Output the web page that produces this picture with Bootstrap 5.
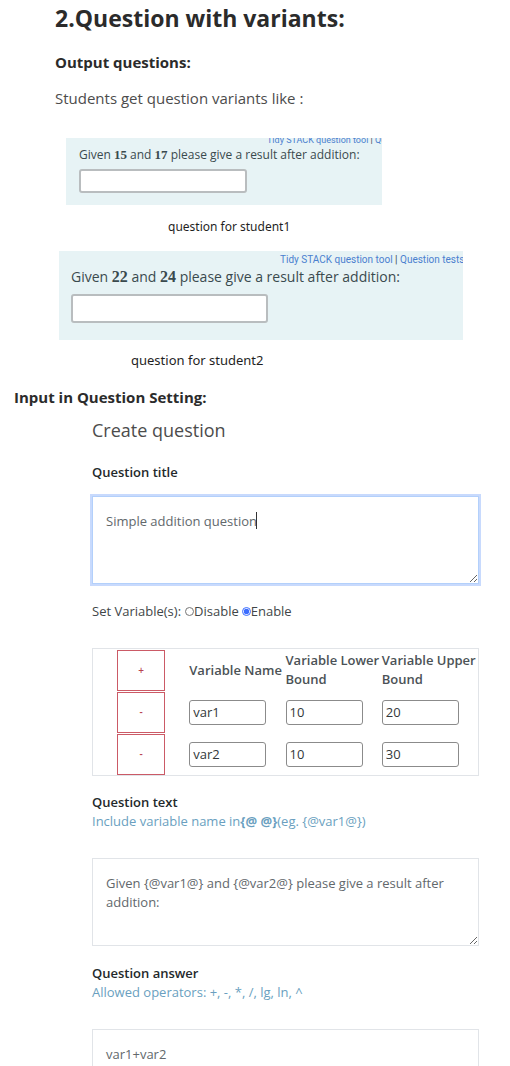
<!DOCTYPE html>
<html lang="en">
<head>
<meta charset="utf-8">
<meta name="viewport" content="width=device-width, initial-scale=1">
<title>Question with variants</title>
<link href="https://cdn.jsdelivr.net/npm/bootstrap@5.3.0/dist/css/bootstrap.min.css" rel="stylesheet">
<style>
  body { font-family: "Open Sans", "Noto Sans", sans-serif; font-size: 13px; line-height: 19px; color: #414648; background: #fff; }
  .guide { height: 100vh; overflow: hidden; }
  .intro { padding-left: 55px; }
  .intro h1 { font-size: 23px; line-height: 36px; font-weight: 700; color: #2b2b2b; }
  .sub-title { font-size: 15px; line-height: 20px; font-weight: 700; color: #2b2b2b; }
  .lead-in { font-size: 15px; line-height: 20px; color: #4c4c4c; }

  .preview { background: #e7f3f5; overflow: hidden; color: #3a4a4e; line-height: 20px; }
  .preview a { color: #4a80cf; text-decoration: none; }
  .preview b { font-family: "Liberation Serif", serif; line-height: 1; }
  .preview input { border: 2px solid #b9bdbf; border-radius: 3px; background: #fff; display: block; max-width: 100%; }
  .preview label { display: block; }
  .tool-links { white-space: nowrap; font-family: Roboto, sans-serif; }
  .preview-a { max-width: 316px; margin: 30px 0 12px 11px; padding: 0 13px 12px; font-size: 12px; }
  .preview-a b { font-size: 13px; }
  .preview-a .tool-links { height: 7px; font-size: 9px; line-height: 10px; padding-left: 188px; }
  .preview-a input { width: 168px; height: 24px; margin-top: 4px; }
  .preview-b { max-width: 404px; margin: 14px 0 10px 4px; padding: 0 12px 17px; font-size: 14px; }
  .preview-b b { font-size: 16px; }
  .preview-b .tool-links { height: 16px; font-size: 10px; line-height: 14px; padding-left: 209px; }
  .preview-b input { width: 197px; height: 29px; margin-top: 7px; }
  .caption-text { font-family: "Noto Sans", sans-serif; line-height: 20px; color: #1f1f1f; }
  .caption-a { font-size: 12px; padding-left: 113px; }
  .caption-b { font-size: 13px; padding-left: 76px; }

  .section-head { margin: 17px 0 8px; padding-left: 14px; }
  .builder { padding: 0 31px 0 92px; }
  .builder h2 { font-size: 18px; line-height: 30px; font-weight: 400; color: #4c4c4c; margin-bottom: 18px; }
  .field-label { display: block; font-weight: 600; color: #24292b; }
  .hint { color: #6a9fc0; margin-bottom: 27px; }
  .field { margin-bottom: 18px; }
  .field textarea { display: block; width: 100%; height: 88px; padding: 15px 13px; font-size: 13px; line-height: 19px; color: #62686c; border: 1px solid #e1e4e8; border-radius: 0; resize: vertical; background: #fff; }
  .title-box { margin-top: 14px; }
  .field textarea.is-active { border-color: #b3d0fb; box-shadow: 0 0 0 2px #c8dafd; outline: 0; caret-color: transparent; }
  .caret { position: absolute; left: 164px; top: 16px; width: 1px; height: 17px; background: #333; }
  .mode { margin-bottom: 27px; }
  .mode input { width: 9px; height: 9px; margin: 0; accent-color: #3b6cff; }
  .mode label { margin-right: 3px; }

  .variables { width: 100%; table-layout: fixed; border: 1px solid #e1e4e8; border-collapse: separate; border-spacing: 0; margin-bottom: 17px; }
  .variables th, .variables td { height: 42px; padding: 0; vertical-align: middle; }
  .variables th { font-weight: 600; color: #4b5256; }
  .variables input { display: block; width: 77px; height: 25px; padding: 0 3px; font-size: 13px; color: #33383a; border: 1px solid #8b8b8b; border-radius: 3px; }
  .variables button { display: block; width: 48px; height: 41px; margin: auto; padding: 0; border: 1px solid #cb5a66; border-radius: 0; background: #fff; color: #b84450; font-size: 10px; font-weight: 600; }
</style>
</head>
<body>
<main class="guide">
  <section class="intro">
    <h1 class="m-0">2.Question with variants:</h1>
    <h2 class="sub-title mt-3 mb-3">Output questions:</h2>
    <p class="lead-in mb-0">Students get question variants like :</p>

    <div class="preview preview-a">
      <div class="tool-links d-flex align-items-end"><span><a href="#">Tidy STACK question tool</a> | <a href="#">Question tests</a></span></div>
      <label for="answer1">Given <b>15</b> and <b>17</b> please give a result after addition:</label>
      <input id="answer1" type="text">
    </div>
    <p class="caption-text caption-a mb-0">question for student1</p>

    <div class="preview preview-b">
      <div class="tool-links d-flex align-items-end"><span><a href="#">Tidy STACK question tool</a> | <a href="#">Question tests</a></span></div>
      <label for="answer2">Given <b>22</b> and <b>24</b> please give a result after addition:</label>
      <input id="answer2" type="text">
    </div>
    <p class="caption-text caption-b mb-0">question for student2</p>
  </section>

  <h2 class="sub-title section-head">Input in Question Setting:</h2>

  <form class="builder">
    <h2>Create question</h2>
    <div class="field">
      <label class="field-label" for="title">Question title</label>
      <div class="title-box position-relative">
        <textarea id="title" class="is-active">Simple addition question</textarea>
        <span class="caret"></span>
      </div>
    </div>

    <div class="mode d-flex align-items-center">
      <span class="me-1">Set Variable(s):</span>
      <input type="radio" name="mode" id="off"><label for="off">Disable</label>
      <input type="radio" name="mode" id="on" checked><label for="on">Enable</label>
    </div>

    <table class="variables">
      <thead>
        <tr><th><button type="button">+</button></th><th>Variable Name</th><th>Variable Lower Bound</th><th>Variable Upper Bound</th></tr>
      </thead>
      <tbody>
        <tr>
          <td><button type="button">-</button></td>
          <td><input type="text" value="var1" aria-label="Variable name"></td>
          <td><input type="text" value="10" aria-label="Lower bound"></td>
          <td><input type="text" value="20" aria-label="Upper bound"></td>
        </tr>
        <tr>
          <td><button type="button">-</button></td>
          <td><input type="text" value="var2" aria-label="Variable name"></td>
          <td><input type="text" value="10" aria-label="Lower bound"></td>
          <td><input type="text" value="30" aria-label="Upper bound"></td>
        </tr>
      </tbody>
    </table>

    <div class="field">
      <label class="field-label" for="text">Question text</label>
      <div class="hint">Include variable name in<strong>{@ @}</strong>(eg. {@var1@})</div>
      <textarea id="text">Given {@var1@} and {@var2@} please give a result after addition:</textarea>
    </div>
    <div class="field">
      <label class="field-label" for="answer">Question answer</label>
      <div class="hint">Allowed operators: +, -, *, /, lg, ln, ^</div>
      <textarea id="answer">var1+var2</textarea>
    </div>
  </form>
</main>
<script src="https://cdn.jsdelivr.net/npm/bootstrap@5.3.0/dist/js/bootstrap.bundle.min.js"></script>
</body>
</html>
